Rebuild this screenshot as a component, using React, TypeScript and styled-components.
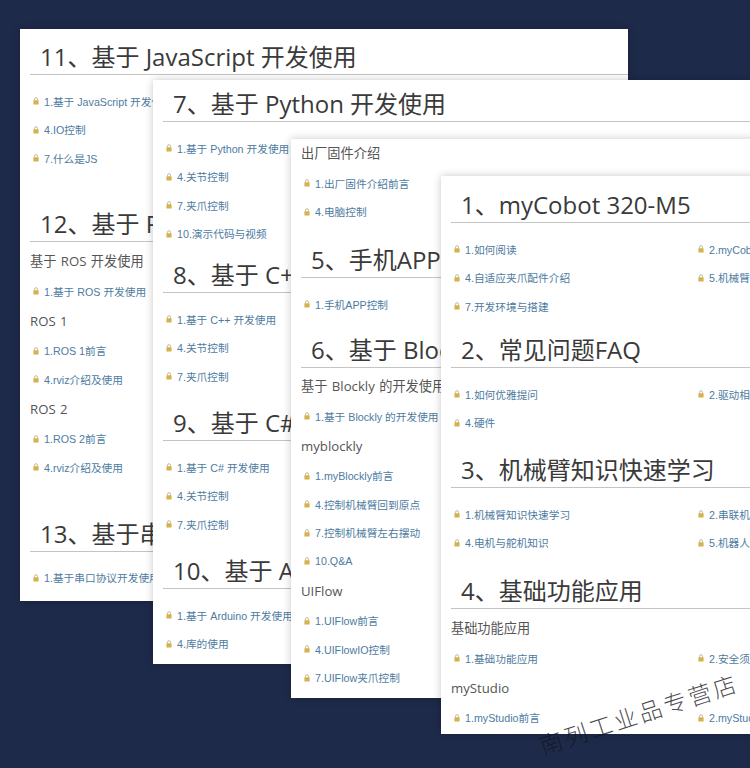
import React from 'react'
import styled, { createGlobalStyle } from 'styled-components'

const GlobalStyle = createGlobalStyle`
  html, body {
    margin: 0;
    padding: 0;
    background: #1e2a4a;
  }
`

type Block =
  | { kind: 'heading'; text: string; gap: number }
  | { kind: 'sub'; text: string; gap?: number }
  | { kind: 'list'; items: [string, string?][] }

type Page = { left: number; top: number; height: number; pad: number; z: number; blocks: Block[] }

const pages: Page[] = [
  {
    left: 20, top: 29, height: 572, pad: 13, z: 1,
    blocks: [
      { kind: 'heading', text: '11、基于 JavaScript 开发使用', gap: 0 },
      { kind: 'list', items: [['1.基于 JavaScript 开发使用'], ['4.IO控制'], ['7.什么是JS']] },
      { kind: 'heading', text: '12、基于 ROS 开发使用', gap: 36.5 },
      { kind: 'sub', text: '基于 ROS 开发使用', gap: 4 },
      { kind: 'list', items: [['1.基于 ROS 开发使用']] },
      { kind: 'sub', text: 'ROS 1' },
      { kind: 'list', items: [['1.ROS 1前言'], ['4.rviz介绍及使用']] },
      { kind: 'sub', text: 'ROS 2' },
      { kind: 'list', items: [['1.ROS 2前言'], ['4.rviz介绍及使用']] },
      { kind: 'heading', text: '13、基于串口协议开发使用', gap: 37 },
      { kind: 'list', items: [['1.基于串口协议开发使用']] },
    ],
  },
  {
    left: 153, top: 80, height: 584, pad: 9, z: 2,
    blocks: [
      { kind: 'heading', text: '7、基于 Python 开发使用', gap: 0 },
      { kind: 'list', items: [['1.基于 Python 开发使用'], ['4.关节控制'], ['7.夹爪控制'], ['10.演示代码与视频']] },
      { kind: 'heading', text: '8、基于 C++ 开发使用', gap: 12 },
      { kind: 'list', items: [['1.基于 C++ 开发使用'], ['4.关节控制'], ['7.夹爪控制']] },
      { kind: 'heading', text: '9、基于 C# 开发使用', gap: 17.5 },
      { kind: 'list', items: [['1.基于 C# 开发使用'], ['4.关节控制'], ['7.夹爪控制']] },
      { kind: 'heading', text: '10、基于 Arduino 开发使用', gap: 17.5 },
      { kind: 'list', items: [['1.基于 Arduino 开发使用'], ['4.库的使用']] },
    ],
  },
  {
    left: 291, top: 139, height: 559, pad: 0, z: 3,
    blocks: [
      { kind: 'sub', text: '出厂固件介绍', gap: -1 },
      { kind: 'list', items: [['1.出厂固件介绍前言'], ['4.电脑控制']] },
      { kind: 'heading', text: '5、手机APP 控制使用', gap: 19 },
      { kind: 'list', items: [['1.手机APP控制']] },
      { kind: 'heading', text: '6、基于 Blockly 开发使用', gap: 16.5 },
      { kind: 'sub', text: '基于 Blockly 的开发使用', gap: 3 },
      { kind: 'list', items: [['1.基于 Blockly 的开发使用']] },
      { kind: 'sub', text: 'myblockly' },
      { kind: 'list', items: [['1.myBlockly前言'], ['4.控制机械臂回到原点'], ['7.控制机械臂左右摆动'], ['10.Q&A']] },
      { kind: 'sub', text: 'UIFlow' },
      { kind: 'list', items: [['1.UIFlow前言'], ['4.UIFlowIO控制'], ['7.UIFlow夹爪控制']] },
    ],
  },
  {
    left: 441, top: 176, height: 558, pad: 14, z: 4,
    blocks: [
      { kind: 'heading', text: '1、myCobot 320-M5', gap: 0 },
      { kind: 'list', items: [['1.如何阅读', '2.myCobot 320-M5介绍'], ['4.自适应夹爪配件介绍', '5.机械臂电气'], ['7.开发环境与搭建']] },
      { kind: 'heading', text: '2、常见问题FAQ', gap: 14.5 },
      { kind: 'list', items: [['1.如何优雅提问', '2.驱动相关问题'], ['4.硬件']] },
      { kind: 'heading', text: '3、机械臂知识快速学习', gap: 18 },
      { kind: 'list', items: [['1.机械臂知识快速学习', '2.串联机械臂'], ['4.电机与舵机知识', '5.机器人运动学']] },
      { kind: 'heading', text: '4、基础功能应用', gap: 19 },
      { kind: 'sub', text: '基础功能应用', gap: 4 },
      { kind: 'list', items: [['1.基础功能应用', '2.安全须知']] },
      { kind: 'sub', text: 'myStudio' },
      { kind: 'list', items: [['1.myStudio前言', '2.myStudio下载']] },
    ],
  },
]

function LockIcon() {
  return (
    <LockSvg viewBox="0 0 6 8" aria-hidden="true">
      <path d="M1.5 3.5V2.2a1.5 1.5 0 0 1 3 0V3.5" fill="none" stroke="#bdb190" strokeWidth="0.9" />
      <rect x="0.4" y="3.3" width="5.2" height="4.2" rx="0.5" fill="#d4b24e" />
    </LockSvg>
  )
}

function Entry({ text }: { text?: string }) {
  if (!text) return <span />
  return (
    <Item>
      <LockIcon />
      <ItemLink href="#">{text}</ItemLink>
    </Item>
  )
}

export default function App() {
  return (
    <Desk>
      <GlobalStyle />
      {pages.map((page) => (
        <Sheet key={page.left} $left={page.left} $top={page.top} $height={page.height} $pad={page.pad} $z={page.z}>
          {page.blocks.map((block, i) => {
            if (block.kind === 'heading') {
              return <Heading key={i} $gap={block.gap}>{block.text}</Heading>
            }
            if (block.kind === 'sub') {
              return <SubHeading key={i} $gap={block.gap ?? 0}>{block.text}</SubHeading>
            }
            const afterHeading = page.blocks[i - 1]?.kind === 'heading'
            return (
              <List key={i} $afterHeading={afterHeading}>
                {block.items.map((row, r) => (
                  <React.Fragment key={r}>
                    <Entry text={row[0]} />
                    <Entry text={row[1]} />
                  </React.Fragment>
                ))}
              </List>
            )
          })}
        </Sheet>
      ))}
      <Watermark>南列工业品专营店</Watermark>
    </Desk>
  )
}

const Desk = styled.div`
  position: relative;
  width: 750px;
  height: 768px;
  overflow: hidden;
  background: #1e2a4a;
`
const Sheet = styled.div<{ $left: number; $top: number; $height: number; $pad: number; $z: number }>`
  position: absolute;
  left: ${(p) => p.$left}px;
  top: ${(p) => p.$top}px;
  z-index: ${(p) => p.$z};
  width: 608px;
  height: ${(p) => p.$height}px;
  box-sizing: border-box;
  padding: ${(p) => p.$pad}px 0 0 10px;
  overflow: hidden;
  background: #fff;
  box-shadow: 0 0 8px rgba(0, 0, 0, 0.22);
`
const Heading = styled.h2<{ $gap: number }>`
  height: 33px;
  box-sizing: border-box;
  margin: ${(p) => p.$gap}px 0 0;
  padding-left: 10px;
  border-bottom: 1px solid #c4c4c4;
  font-family: 'Open Sans', 'Noto Sans CJK SC', sans-serif;
  font-size: 24px;
  font-weight: 400;
  line-height: 29px;
  color: #3a3a3a;
  white-space: nowrap;
`
const SubHeading = styled.div<{ $gap: number }>`
  height: 31px;
  margin-top: ${(p) => p.$gap}px;
  font-family: 'Open Sans', 'Noto Sans CJK SC', sans-serif;
  font-size: 13.2px;
  word-spacing: 1px;
  line-height: 30px;
  color: #555;
  white-space: nowrap;
`
const List = styled.div<{ $afterHeading: boolean }>`
  display: grid;
  grid-template-columns: 244px 244px;
  grid-auto-rows: 28.5px;
  padding-top: ${(p) => (p.$afterHeading ? 12 : 0)}px;
`
const Item = styled.div`
  display: flex;
  align-items: center;
  gap: 5px;
  padding-left: 3px;
  white-space: nowrap;
`
const LockSvg = styled.svg`
  width: 6px;
  height: 8px;
  flex: none;
`
const ItemLink = styled.a`
  font-family: 'Liberation Sans', 'Noto Sans CJK SC', sans-serif;
  font-size: 10.7px;
  color: #4d7ba1;
  text-decoration: none;
`
const Watermark = styled.div`
  position: absolute;
  left: 535px;
  top: 702px;
  z-index: 5;
  font-family: 'Noto Sans CJK SC', sans-serif;
  font-size: 23px;
  font-weight: 300;
  letter-spacing: 3px;
  line-height: 1;
  color: rgba(20, 20, 28, 0.78);
  white-space: nowrap;
  transform: rotate(-18deg);
`
